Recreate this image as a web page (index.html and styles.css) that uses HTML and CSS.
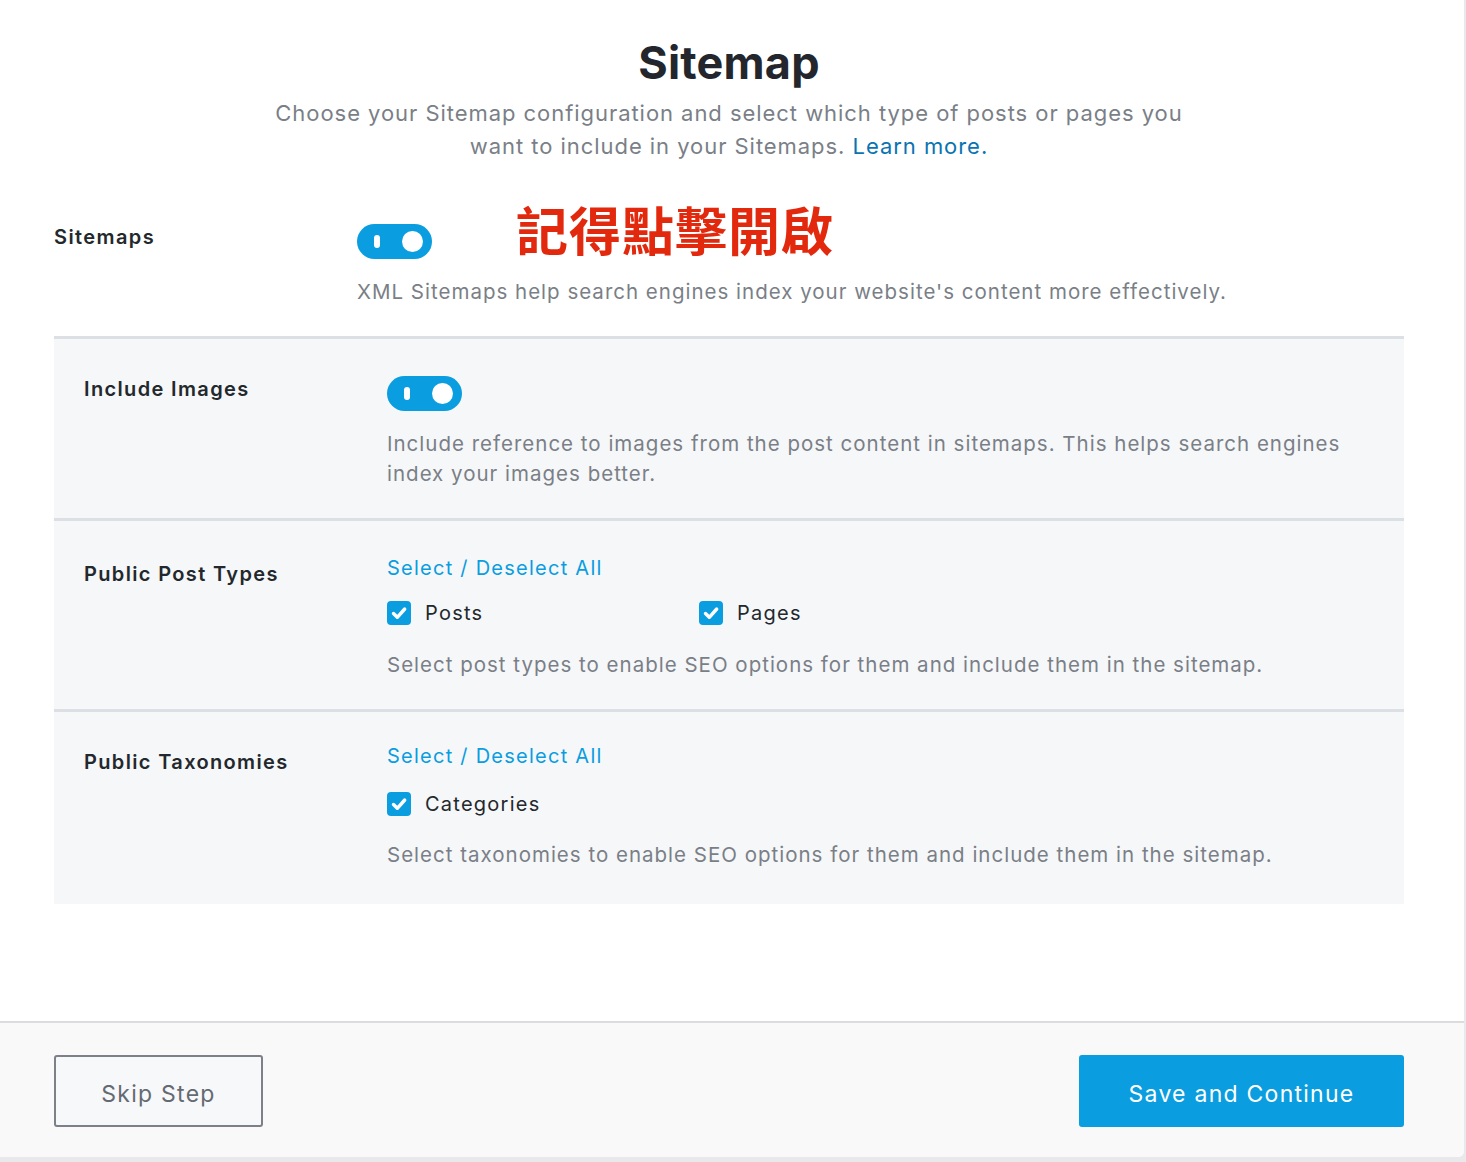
FILE: index.html
```html
<!DOCTYPE html>
<html lang="en">
<head>
<meta charset="utf-8">
<title>Sitemap</title>
<link rel="stylesheet" href="styles.css">
</head>
<body>
<div class="card">
  <div class="main">
    <h1 class="title">Sitemap</h1>
    <p class="subtitle">Choose your Sitemap configuration and select which type of posts or pages you<br>want to include in your Sitemaps. <a class="learn" href="#">Learn more.</a></p>

    <div class="top-row">
      <div class="top-label">Sitemaps</div>
      <div class="top-content">
        <div class="toggle-line">
          <span class="toggle"><span class="toggle-bar"></span><span class="toggle-knob"></span></span>
          <span class="note">記得點擊開啟</span>
        </div>
        <p class="desc desc-top">XML Sitemaps help search engines index your website's content more effectively.</p>
      </div>
    </div>

    <div class="box">
      <div class="row">
        <div class="row-label">Include Images</div>
        <div class="row-content row-content-toggle">
          <span class="toggle"><span class="toggle-bar"></span><span class="toggle-knob"></span></span>
          <p class="desc desc-after-toggle">Include reference to images from the post content in sitemaps. This helps search engines index your images better.</p>
        </div>
      </div>
      <div class="row">
        <div class="row-label row-label-b">Public Post Types</div>
        <div class="row-content">
          <a class="select-all" href="#">Select / Deselect All</a>
          <div class="checks">
            <label class="check"><span class="box-icon"><svg viewBox="0 0 24 24" width="24" height="24"><path d="M6.5 12.5l3.8 3.8 7.4-8.3" fill="none" stroke="#fff" stroke-width="3.4" stroke-linecap="round" stroke-linejoin="round"/></svg></span>Posts</label>
            <label class="check"><span class="box-icon"><svg viewBox="0 0 24 24" width="24" height="24"><path d="M6.5 12.5l3.8 3.8 7.4-8.3" fill="none" stroke="#fff" stroke-width="3.4" stroke-linecap="round" stroke-linejoin="round"/></svg></span>Pages</label>
          </div>
          <p class="desc desc-after-checks">Select post types to enable SEO options for them and include them in the sitemap.</p>
        </div>
      </div>
      <div class="row row-last">
        <div class="row-label">Public Taxonomies</div>
        <div class="row-content row-content-tax">
          <a class="select-all" href="#">Select / Deselect All</a>
          <div class="checks checks-tax">
            <label class="check"><span class="box-icon"><svg viewBox="0 0 24 24" width="24" height="24"><path d="M6.5 12.5l3.8 3.8 7.4-8.3" fill="none" stroke="#fff" stroke-width="3.4" stroke-linecap="round" stroke-linejoin="round"/></svg></span>Categories</label>
          </div>
          <p class="desc desc-after-checks desc-tax">Select taxonomies to enable SEO options for them and include them in the sitemap.</p>
        </div>
      </div>
    </div>
  </div>

  <div class="footer">
    <button class="btn btn-skip" type="button">Skip Step</button>
    <button class="btn btn-save" type="button">Save and Continue</button>
  </div>
</div>
</body>
</html>
```

FILE: styles.css
```css
* { box-sizing: border-box; }

html, body {
  margin: 0;
  padding: 0;
}

body {
  background: #e9e9eb;
  font-family: Inter, "Noto Sans", "Liberation Sans", sans-serif;
  color: #23282d;
  width: 1466px;
  height: 1162px;
  overflow: hidden;
}

.card {
  width: 1464px;
  height: 1157px;
  background: #fff;
  border-bottom-right-radius: 6px;
  display: flex;
  flex-direction: column;
  overflow: hidden;
}

.main {
  padding: 35px 60px 0 54px;
}

.title {
  margin: 0;
  text-align: center;
  font-size: 45px;
  line-height: 55px;
  font-weight: 700;
  color: #23272d;
  letter-spacing: 0.2px;
}

.subtitle {
  margin: 7px 0 0;
  text-align: center;
  font-size: 22px;
  line-height: 33px;
  color: #7a7f87;
  letter-spacing: 0.95px;
}

.learn {
  color: #0a73b1;
  text-decoration: none;
}

.top-row {
  display: flex;
  margin-top: 61px;
}

.top-label {
  width: 303px;
  flex: none;
  font-size: 20px;
  line-height: 24px;
  font-weight: 600;
  letter-spacing: 1.4px;
  padding-top: 1px;
  color: #23282d;
}

.top-content {
  flex: 1;
}

.toggle-line {
  display: flex;
  align-items: flex-start;
  height: 35px;
}

.toggle {
  position: relative;
  display: block;
  flex: none;
  width: 75px;
  height: 35px;
  border-radius: 18px;
  background: #0a9de0;
}

.toggle-bar {
  position: absolute;
  left: 17px;
  top: 11px;
  width: 6px;
  height: 13px;
  border-radius: 3px;
  background: #fff;
}

.toggle-knob {
  position: absolute;
  right: 9px;
  top: 7px;
  width: 21px;
  height: 21px;
  border-radius: 50%;
  background: #fff;
}

.note {
  margin-left: 84px;
  margin-top: -21px;
  font-family: "Noto Sans CJK TC", "Noto Sans CJK SC", sans-serif;
  font-size: 52px;
  line-height: 52px;
  font-weight: 700;
  color: #e3290d;
  letter-spacing: 1px;
  white-space: nowrap;
}

.desc {
  margin: 0;
  font-size: 20.5px;
  line-height: 30px;
  color: #7a7f87;
  letter-spacing: 1px;
}

.desc-top {
  margin-top: 18px;
}

.box {
  margin-top: 29px;
  background: #f6f7f9;
}

.row {
  display: flex;
  border-top: 3px solid #dcdfe4;
  padding: 0 40px 29px 30px;
}

.row-last {
  padding-bottom: 34px;
}

.row-label {
  width: 303px;
  flex: none;
  padding-top: 38px;
  font-size: 20px;
  line-height: 24px;
  font-weight: 600;
  letter-spacing: 1.35px;
  color: #23282d;
}

.row-label-b {
  padding-top: 41px;
}

.row-content {
  flex: 1;
  padding-top: 32px;
}

.row-content-toggle {
  padding-top: 37px;
}

.row-content-tax {
  padding-top: 29px;
}

.desc-after-toggle {
  margin-top: 18px;
}

.select-all {
  display: block;
  font-size: 20px;
  line-height: 30px;
  color: #0a9de0;
  text-decoration: none;
  letter-spacing: 1.25px;
}

.checks {
  display: flex;
  margin-top: 15px;
}

.checks-tax {
  margin-top: 18px;
}

.check {
  display: flex;
  align-items: center;
  width: 312px;
  font-size: 20px;
  line-height: 30px;
  letter-spacing: 1.25px;
  color: #23282d;
}

.box-icon {
  display: block;
  width: 24px;
  height: 24px;
  border-radius: 4px;
  background: #0a9de0;
  margin-right: 14px;
  flex: none;
}

.box-icon svg {
  display: block;
}

.desc-after-checks {
  margin-top: 22px;
}

.desc-tax {
  margin-top: 21px;
}

.footer {
  margin-top: auto;
  border-top: 2px solid #dcdcde;
  background: #f9f9f9;
  height: 136px;
  padding: 32px 60px 0 54px;
  display: flex;
  justify-content: space-between;
  align-items: flex-start;
}

.btn {
  height: 72px;
  padding: 6px 0 0;
  font-family: Inter, "Noto Sans", "Liberation Sans", sans-serif;
  font-size: 23px;
  letter-spacing: 1.25px;
  border-radius: 3px;
  cursor: pointer;
}

.btn-skip {
  width: 209px;
  background: #f7f8fa;
  border: 2px solid #7b8089;
  color: #656a72;
}

.btn-save {
  width: 325px;
  background: #0a9de0;
  border: none;
  color: #fff;
}
```
